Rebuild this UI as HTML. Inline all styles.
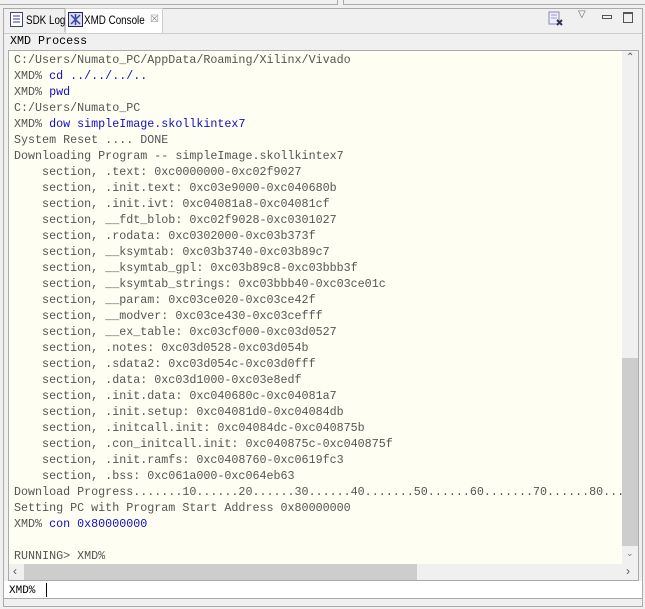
<!DOCTYPE html>
<html><head><style>
*{margin:0;padding:0;box-sizing:border-box}
body{width:645px;height:609px;background:#f0f0f0;position:relative;overflow:hidden;font-family:"Liberation Sans",sans-serif}
.abs{position:absolute;white-space:nowrap}
.con{font-family:"Liberation Mono",monospace;font-size:11.7px;line-height:16px;color:#555;white-space:pre}
.b{color:#1010c0}
.tl{font-size:12px;line-height:16px;color:#000;transform:scaleX(0.82);transform-origin:0 0}
</style></head><body>
<div class="abs" style="left:0;top:0;width:338px;height:5px;border-right:1px solid #aaa;border-bottom:1px solid #aaa;background:#f0f0f0"></div>
<div class="abs" style="left:343px;top:0;width:302px;height:5px;border-left:1px solid #aaa;border-bottom:1px solid #aaa"></div>
<!-- panel -->
<div class="abs" style="left:3px;top:8px;width:640px;height:599px;border:1px solid #aaa;background:#f0f0f0"></div>
<div class="abs" style="left:4px;top:9px;width:61px;height:23px;border-right:1px solid #ccc"></div>
<div class="abs tl" style="left:26px;top:12px">SDK Log</div>
<svg class="abs" style="left:10px;top:12px" width="14" height="16"><rect x="0.5" y="0.5" width="12" height="14" fill="#fff" stroke="#446"/><g stroke="#33a"><line x1="3" y1="4" x2="10" y2="4"/><line x1="3" y1="7" x2="10" y2="7"/><line x1="3" y1="10" x2="10" y2="10"/></g></svg>
<div class="abs" style="left:65px;top:8px;width:98px;height:25px;background:#fff;border:1px solid #ccc;border-bottom:none"></div>
<div class="abs tl" style="left:84px;top:12px">XMD Console</div>
<div class="abs" style="left:150px;top:12px;font-size:10px;line-height:16px;color:#888">☒</div>
<svg class="abs" style="left:68px;top:12px" width="15" height="15"><rect x="0.5" y="0.5" width="14" height="14" fill="#dde" stroke="#226"/><path d="M3 3L12 12M12 3L3 12M7.5 2V13" stroke="#3344aa" stroke-width="1.5"/></svg>
<svg class="abs" style="left:548px;top:11px" width="16" height="16"><rect x="1" y="1" width="10" height="12" fill="#eef" stroke="#88a"/><path d="M3 4h6M3 7h6" stroke="#99b"/><path d="M9 9l5 5M14 9l-5 5" stroke="#335" stroke-width="2"/></svg>
<div class="abs" style="left:578px;top:9px;font-size:10px;color:#666">▽</div>
<div class="abs" style="left:602px;top:15px;width:10px;height:4px;border:1px solid #555"></div>
<div class="abs" style="left:623px;top:12px;width:10px;height:11px;border:1px solid #555;border-top-width:2px"></div>
<div class="abs" style="left:4px;top:33px;width:638px;height:1px;background:#ccc"></div>
<div class="abs con" style="left:10px;top:33px;color:#000">XMD Process</div>
<!-- console -->
<div class="abs" style="left:8px;top:50px;width:631px;height:531px;border:1px solid #aaa;background:#fefef2"></div>
<div class="abs con" style="left:14px;top:52px">C:/Users/Numato_PC/AppData/Roaming/Xilinx/Vivado
XMD% <span class="b">cd ../../../..</span>
XMD% <span class="b">pwd</span>
C:/Users/Numato_PC
XMD% <span class="b">dow simpleImage.skollkintex7</span>
System Reset .... DONE
Downloading Program -- simpleImage.skollkintex7
    section, .text: 0xc0000000-0xc02f9027
    section, .init.text: 0xc03e9000-0xc040680b
    section, .init.ivt: 0xc04081a8-0xc04081cf
    section, __fdt_blob: 0xc02f9028-0xc0301027
    section, .rodata: 0xc0302000-0xc03b373f
    section, __ksymtab: 0xc03b3740-0xc03b89c7
    section, __ksymtab_gpl: 0xc03b89c8-0xc03bbb3f
    section, __ksymtab_strings: 0xc03bbb40-0xc03ce01c
    section, __param: 0xc03ce020-0xc03ce42f
    section, __modver: 0xc03ce430-0xc03cefff
    section, __ex_table: 0xc03cf000-0xc03d0527
    section, .notes: 0xc03d0528-0xc03d054b
    section, .sdata2: 0xc03d054c-0xc03d0fff
    section, .data: 0xc03d1000-0xc03e8edf
    section, .init.data: 0xc040680c-0xc04081a7
    section, .init.setup: 0xc04081d0-0xc04084db
    section, .initcall.init: 0xc04084dc-0xc040875b
    section, .con_initcall.init: 0xc040875c-0xc040875f
    section, .init.ramfs: 0xc0408760-0xc0619fc3
    section, .bss: 0xc061a000-0xc064eb63
Download Progress.......10......20......30......40.......50......60.......70......80...
Setting PC with Program Start Address 0x80000000
XMD% <span class="b">con 0x80000000</span>

RUNNING> XMD%</div>
<!-- vscroll -->
<div class="abs" style="left:622px;top:51px;width:16px;height:513px;background:#f0f0f0"></div>
<div class="abs" style="left:622px;top:358px;width:16px;height:188px;background:#cdcdcd"></div>
<div class="abs" style="left:626px;top:52px;font-size:10px;color:#555">⌃</div>
<div class="abs" style="left:626px;top:548px;font-size:9px;color:#777">⌄</div>
<!-- hscroll -->
<div class="abs" style="left:9px;top:564px;width:629px;height:16px;background:#f0f0f0"></div>
<div class="abs" style="left:24px;top:564px;width:393px;height:16px;background:#cdcdcd"></div>
<div class="abs" style="left:13px;top:564px;font-size:12px;color:#555">‹</div>
<div class="abs" style="left:626px;top:564px;font-size:12px;color:#555">›</div>
<!-- input -->
<div class="abs" style="left:4px;top:581px;width:638px;height:18px;background:#fff;border-bottom:1px solid #aaa"></div>
<div class="abs con" style="left:9px;top:583px;color:#000;font-size:11px">XMD%</div>
<div class="abs" style="left:46px;top:583px;width:1px;height:14px;background:#000"></div>
</body></html>
